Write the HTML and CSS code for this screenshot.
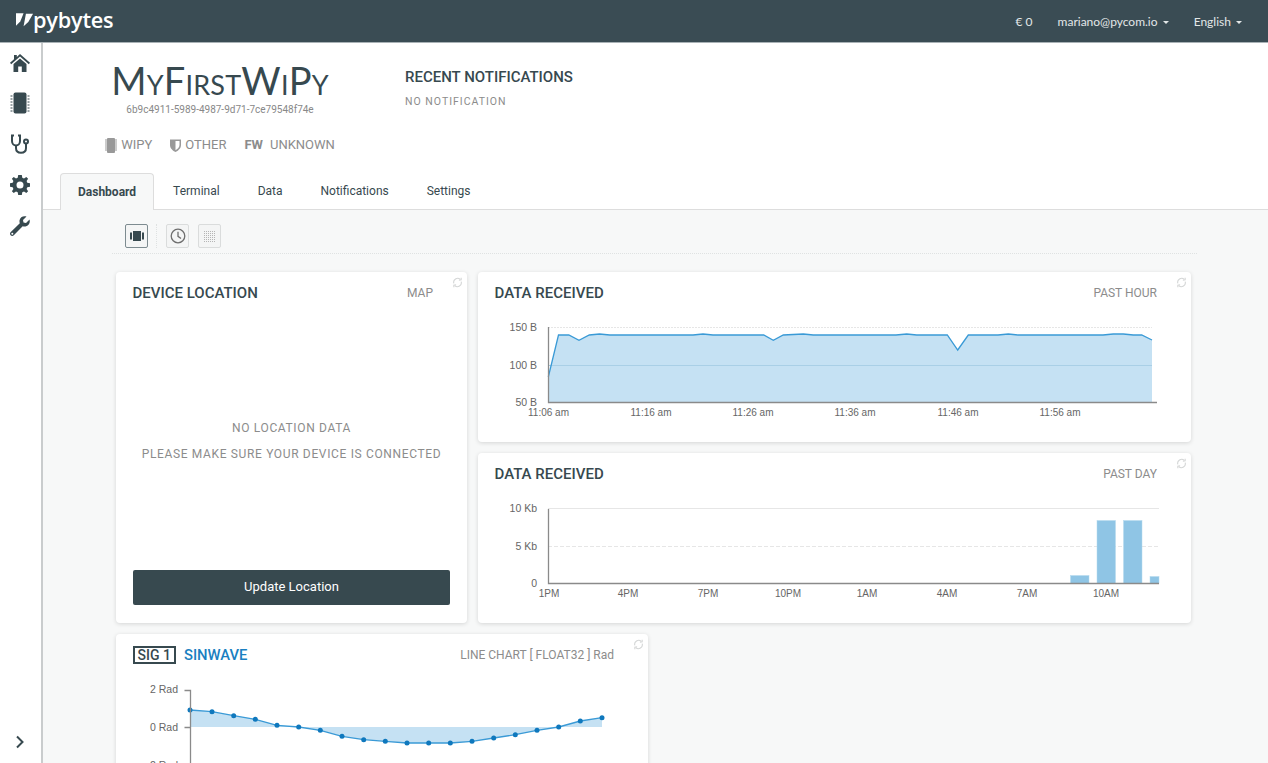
FILE: index.html
```html
<!DOCTYPE html>
<html lang="en">
<head>
    <meta charset="UTF-8">
    <title>Pybytes - MyFirstWiPy</title>
    <link rel="stylesheet" href="styles.css">
</head>
<body>
    <header class="topbar">
        <a href="#" class="logo">
            <svg class="logo-mark" viewBox="0 0 19 14" width="18" height="14"><polygon points="0,0 8,0 4.5,8.5 0,13"/><polygon points="10.5,0.5 18,0.5 13,9 8,13.500"/></svg>
            <span class="logo-text">pybytes</span>
        </a>
        <nav class="topnav">
            <span class="balance">€ 0</span>
            <a href="#" class="topnav-link email">mariano@pycom.io <i class="caret"></i></a>
            <a href="#" class="topnav-link lang">English <i class="caret"></i></a>
        </nav>
    </header>

    <div class="layout">
        <aside class="sidebar">
            <a href="#" class="side-link">
                <svg viewBox="0 0 22 20" width="22" height="20"><path d="M11 1 L21 9.800 L19.800 11.200 L11 3.600 L2.200 11.200 L1 9.800 L5 6.300 V2 H7.800 V3.900 Z"/><path d="M4.500 11 L11 5.400 L17.500 11 V19 H12.800 V13.500 H9.200 V19 H4.500 Z"/></svg>
            </a>
            <a href="#" class="side-link">
                <svg viewBox="0 0 20 22" width="20" height="22"><rect x="3.500" y="0.500" width="13" height="21" rx="2"/><path d="M0.500 4h2M0.500 7h2M0.500 10h2M0.500 13h2M0.500 16h2M0.500 19h2M17.500 4h2M17.500 7h2M17.500 10h2M17.500 13h2M17.500 16h2M17.500 19h2" class="pins"/></svg>
            </a>
            <a href="#" class="side-link">
                <svg viewBox="0 0 20 20" width="20" height="20" class="line-icon"><path d="M4 1.500 H2 V7 C2 10 4 11.500 6 11.500 C8 11.500 10 10 10 7 V1.500 H8"/><path d="M6 11.500 V14 C6 17 8 18.800 11 18.800 C14 18.800 16 17 16 14 V9.500"/><circle cx="16" cy="7.500" r="2"/></svg>
            </a>
            <a href="#" class="side-link">
                <svg viewBox="0 0 20 20" width="20" height="20"><path fill-rule="evenodd" d="M8.200 0 H11.800 L12.300 2.700 L14 3.400 L16.300 1.900 L18.100 3.700 L16.600 6 L17.300 7.700 L20 8.200 V11.800 L17.300 12.300 L16.600 14 L18.100 16.300 L16.300 18.100 L14 16.600 L12.300 17.300 L11.800 20 H8.200 L7.700 17.300 L6 16.600 L3.700 18.100 L1.900 16.300 L3.400 14 L2.700 12.300 L0 11.800 V8.200 L2.700 7.700 L3.400 6 L1.900 3.700 L3.700 1.900 L6 3.400 L7.700 2.700 Z M10 6.500 A3.500 3.500 0 1 0 10 13.500 A3.500 3.500 0 1 0 10 6.500 Z"/></svg>
            </a>
            <a href="#" class="side-link">
                <svg viewBox="0 0 20 20" width="20" height="20"><path fill-rule="evenodd" d="M19.500 3.500 L16 7 L13.500 6.500 L13 4 L16.500 0.500 C13.500 -0.500 10 1 9.500 4.500 C9.400 5.500 9.500 6.300 9.800 7.200 L0.800 16 C-0.200 17 -0.200 18.300 0.600 19.200 C1.500 20.100 2.900 20.100 3.800 19.200 L12.700 10.200 C13.600 10.500 14.500 10.600 15.500 10.400 C19 9.900 20.500 6.500 19.500 3.500 Z M2.300 16.700 A1 1 0 1 0 2.300 18.700 A1 1 0 1 0 2.300 16.700 Z"/></svg>
            </a>
            <a href="#" class="side-link expand">
                <svg viewBox="0 0 10 14" width="10" height="14" class="line-icon"><path d="M2 1.500 L7.500 7 L2 12.500"/></svg>
            </a>
        </aside>

        <main class="main">
            <section class="device-head">
                <div class="device">
                    <h1 class="device-name">MyFirstWiPy</h1>
                    <div class="device-id">6b9c4911-5989-4987-9d71-7ce79548f74e</div>
                    <div class="specs">
                        <span class="spec">
                            <svg viewBox="0 0 12 15" width="12" height="15"><rect x="2" y="0" width="8" height="15" rx="1"/><path d="M0 2h2M0 4h2M0 6h2M0 8h2M0 10h2M0 12h2M10 2h2M10 4h2M10 6h2M10 8h2M10 10h2M10 12h2" class="pins"/></svg>
                            WIPY
                        </span>
                        <span class="spec">
                            <svg viewBox="0 0 11 13" width="11" height="13"><path fill-rule="evenodd" d="M0 0.500 H11 V6 C11 9.500 8 11.800 5.500 13 C3 11.800 0 9.500 0 6 Z M5.500 2 V11.200 C7.300 10.200 9.500 8.500 9.500 6 V2 Z"/></svg>
                            OTHER
                        </span>
                        <span class="spec"><b>FW</b> UNKNOWN</span>
                    </div>
                </div>
                <div class="recent">
                    <h3 class="recent-title">RECENT NOTIFICATIONS</h3>
                    <p class="recent-empty">NO NOTIFICATION</p>
                </div>
            </section>

            <ul class="tabs">
                <li class="tab active"><a href="#">Dashboard</a></li>
                <li class="tab"><a href="#">Terminal</a></li>
                <li class="tab"><a href="#">Data</a></li>
                <li class="tab"><a href="#">Notifications</a></li>
                <li class="tab"><a href="#">Settings</a></li>
            </ul>

            <section class="dashboard">
                <div class="toolbar">
                    <button class="tool selected">
                        <svg viewBox="0 0 14 10" width="14" height="10"><rect x="3" y="0" width="8" height="10"/><rect x="0" y="1.500" width="2" height="7"/><rect x="12" y="1.500" width="2" height="7"/></svg>
                    </button>
                    <span class="tool-sep"></span>
                    <button class="tool">
                        <svg viewBox="0 0 16 16" width="16" height="16" class="clock"><circle cx="8" cy="8" r="6.800"/><path d="M8 3.800 V8.300 L11 10.500"/></svg>
                    </button>
                    <button class="tool">
                        <svg viewBox="0 0 11 11" width="11" height="11" class="dots"><path d="M0 0.500h11M0 2.500h11M0 4.500h11M0 6.500h11M0 8.500h11M0 10.500h11"/></svg>
                    </button>
                </div>

                <div class="cards">
                    <article class="card location">
                        <svg class="refresh" viewBox="0 0 12 12" width="11" height="11"><path d="M2 7 A4.300 4.300 0 0 1 9 2.600 M10 5 A4.300 4.300 0 0 1 3 9.400"/><path d="M7.500 3.500 L10 3 V0.800 M4.500 8.500 L2 9 V11.200"/></svg>
                        <div class="card-head">
                            <h4 class="card-title">DEVICE LOCATION</h4>
                            <span class="card-meta">MAP</span>
                        </div>
                        <div class="no-data">
                            <p>NO LOCATION DATA</p>
                            <p>PLEASE MAKE SURE YOUR DEVICE IS CONNECTED</p>
                        </div>
                        <button class="update-btn">Update Location</button>
                    </article>

                    <article class="card">
                        <svg class="refresh" viewBox="0 0 12 12" width="11" height="11"><path d="M2 7 A4.300 4.300 0 0 1 9 2.600 M10 5 A4.300 4.300 0 0 1 3 9.400"/><path d="M7.500 3.500 L10 3 V0.800 M4.500 8.500 L2 9 V11.200"/></svg>
                        <div class="card-head">
                            <h4 class="card-title">DATA RECEIVED</h4>
                            <span class="card-meta">PAST HOUR</span>
                        </div>
                        <svg class="chart" viewBox="478 314 713 110" width="713" height="110">
                            <line x1="548" y1="327.500" x2="1152" y2="327.500" class="grid dotted"/>
                            <polygon class="area" points="548.300,402 548.300,377 558.500,335 568.800,335 579,340.300 589.300,335 599.500,334 609.800,335 693,335 703,334 713,335 763.700,335 773.300,340.300 783.300,335 803.300,334 813.300,335 896,335 906.700,334 916.700,335 947.300,335 957.700,350 968.300,335 998,335 1008.300,334 1018,335 1103,335 1113.300,334 1123.300,334 1133.300,335 1141.700,335 1152,340 1152,402"/>
                            <line x1="548" y1="365.500" x2="1152" y2="365.500" class="grid over"/>
                            <polyline class="line" points="548.300,377 558.500,335 568.800,335 579,340.300 589.300,335 599.500,334 609.800,335 693,335 703,334 713,335 763.700,335 773.300,340.300 783.300,335 803.300,334 813.300,335 896,335 906.700,334 916.700,335 947.300,335 957.700,350 968.300,335 998,335 1008.300,334 1018,335 1103,335 1113.300,334 1123.300,334 1133.300,335 1141.700,335 1152,340"/>
                            <path class="axis" d="M548.500 327 V402.500 H1157"/>
                            <text x="537" y="331" class="tick end">150 B</text>
                            <text x="537" y="369" class="tick end">100 B</text>
                            <text x="537" y="406" class="tick end">50 B</text>
                            <text x="548.500" y="416" class="tick small mid">11:06 am</text>
                            <text x="651" y="416" class="tick small mid">11:16 am</text>
                            <text x="753" y="416" class="tick small mid">11:26 am</text>
                            <text x="855" y="416" class="tick small mid">11:36 am</text>
                            <text x="958" y="416" class="tick small mid">11:46 am</text>
                            <text x="1060" y="416" class="tick small mid">11:56 am</text>
                        </svg>
                    </article>

                    <article class="card">
                        <svg class="refresh" viewBox="0 0 12 12" width="11" height="11"><path d="M2 7 A4.300 4.300 0 0 1 9 2.600 M10 5 A4.300 4.300 0 0 1 3 9.400"/><path d="M7.500 3.500 L10 3 V0.800 M4.500 8.500 L2 9 V11.200"/></svg>
                        <div class="card-head">
                            <h4 class="card-title">DATA RECEIVED</h4>
                            <span class="card-meta">PAST DAY</span>
                        </div>
                        <svg class="chart" viewBox="478 495 713 110" width="713" height="110">
                            <line x1="548" y1="508.500" x2="1159" y2="508.500" class="grid"/>
                            <line x1="548" y1="546.500" x2="1159" y2="546.500" class="grid dashed"/>
                            <rect x="1070.500" y="575.500" width="18.500" height="8" class="bar"/>
                            <rect x="1097" y="520.500" width="18.500" height="63" class="bar"/>
                            <rect x="1123.500" y="520.500" width="18.500" height="63" class="bar"/>
                            <rect x="1150" y="576.500" width="9" height="7" class="bar"/>
                            <path class="axis" d="M548.500 509 V583.500 H1159"/>
                            <text x="537" y="512" class="tick end">10 Kb</text>
                            <text x="537" y="550" class="tick end">5 Kb</text>
                            <text x="537" y="587" class="tick end">0</text>
                            <text x="549" y="597" class="tick small mid">1PM</text>
                            <text x="628" y="597" class="tick small mid">4PM</text>
                            <text x="708" y="597" class="tick small mid">7PM</text>
                            <text x="788" y="597" class="tick small mid">10PM</text>
                            <text x="867" y="597" class="tick small mid">1AM</text>
                            <text x="947" y="597" class="tick small mid">4AM</text>
                            <text x="1027" y="597" class="tick small mid">7AM</text>
                            <text x="1106" y="597" class="tick small mid">10AM</text>
                        </svg>
                    </article>
                </div>

                <article class="card signal">
                    <svg class="refresh" viewBox="0 0 12 12" width="11" height="11"><path d="M2 7 A4.300 4.300 0 0 1 9 2.600 M10 5 A4.300 4.300 0 0 1 3 9.400"/><path d="M7.500 3.500 L10 3 V0.800 M4.500 8.500 L2 9 V11.200"/></svg>
                    <div class="card-head">
                        <h4 class="card-title">
                            <span class="sig-badge">SIG 1</span>
                            <span class="sig-name">SINWAVE</span>
                        </h4>
                        <span class="card-meta">LINE CHART [ FLOAT32 ] Rad</span>
                    </div>
                    <svg class="chart" viewBox="116 676 532 100" width="532" height="100">
                        <polygon class="area" points="190,710 212,711.700 233.700,715.700 255.300,719.300 277,725.300 298.700,727 320.300,730.300 342,736.300 363.700,739.700 385.300,741.300 407,743 428.700,743 450.300,743 472,741.300 493.700,738 515.300,734.700 537,730.300 558.700,727 580.300,721 602,717.700 602,727 190,727"/>
                        <polyline class="line" points="190,710 212,711.700 233.700,715.700 255.300,719.300 277,725.300 298.700,727 320.300,730.300 342,736.300 363.700,739.700 385.300,741.300 407,743 428.700,743 450.300,743 472,741.300 493.700,738 515.300,734.700 537,730.300 558.700,727 580.300,721 602,717.700"/>
                        <g class="dots-group">
                            <circle cx="190" cy="710" r="2.500"/><circle cx="212" cy="711.700" r="2.500"/><circle cx="233.700" cy="715.700" r="2.500"/><circle cx="255.300" cy="719.300" r="2.500"/><circle cx="277" cy="725.300" r="2.500"/><circle cx="298.700" cy="727" r="2.500"/><circle cx="320.300" cy="730.300" r="2.500"/><circle cx="342" cy="736.300" r="2.500"/><circle cx="363.700" cy="739.700" r="2.500"/><circle cx="385.300" cy="741.300" r="2.500"/><circle cx="407" cy="743" r="2.500"/><circle cx="428.700" cy="743" r="2.500"/><circle cx="450.300" cy="743" r="2.500"/><circle cx="472" cy="741.300" r="2.500"/><circle cx="493.700" cy="738" r="2.500"/><circle cx="515.300" cy="734.700" r="2.500"/><circle cx="537" cy="730.300" r="2.500"/><circle cx="558.700" cy="727" r="2.500"/><circle cx="580.300" cy="721" r="2.500"/><circle cx="602" cy="717.700" r="2.500"/>
                        </g>
                        <path class="axis" d="M184.500 690.500 H190.500 V776 M184.500 727.500 H190.500"/>
                        <text x="178" y="693" class="tick end">2 Rad</text>
                        <text x="178" y="731" class="tick end">0 Rad</text>
                        <text x="178" y="769" class="tick end">-2 Rad</text>
                    </svg>
                </article>
            </section>
        </main>
    </div>
</body>
</html>
```

FILE: styles.css
```css
* {
    box-sizing: border-box;
}
html, body {
    height: 100%;
}
body {
    margin: 0;
    overflow: hidden;
    font-family: Roboto, sans-serif;
    color: #37494f;
    background-color: #fff;
}
a {
    color: inherit;
    text-decoration: none;
}
h1, h3, h4, p, ul {
    margin: 0;
    padding: 0;
}

/* top bar */
.topbar {
    height: 43px;
    display: flex;
    align-items: center;
    justify-content: space-between;
    padding: 0 26px 0 16px;
    background-color: #3a4c54;
    border-bottom: 1px solid #a9b2b6;
}
.logo {
    display: flex;
    align-items: center;
    color: #fff;
}
.logo-mark {
    fill: #fff;
    margin-bottom: 3px;
}
.logo-text {
    font-family: "Open Sans", sans-serif;
    font-weight: 600;
    font-size: 21.7px;
    line-height: 26px;
    letter-spacing: -0.2px;
    margin-bottom: 2px;
    margin-left: -1px;
}
.topnav {
    display: flex;
    align-items: center;
    font-family: Lato, sans-serif;
    font-size: 12px;
    color: #e3e7e8;
}
.balance {
    margin-right: 25px;
}
.email {
    margin-right: 25px;
}
.caret {
    display: inline-block;
    width: 0;
    height: 0;
    margin-left: 2px;
    vertical-align: middle;
    border-top: 3px solid #e3e7e8;
    border-left: 3px solid transparent;
    border-right: 3px solid transparent;
}

/* shell */
.layout {
    display: flex;
    height: 720px;
}
.sidebar {
    width: 43px;
    flex: none;
    display: flex;
    flex-direction: column;
    align-items: center;
    padding: 0 1px 0 0;
    border-right: 2px solid #c9cccd;
    background-color: #fff;
}
.side-link {
    height: 41px;
    width: 100%;
    flex: none;
    display: flex;
    align-items: center;
    justify-content: center;
}
.side-link:first-child {
    height: 39px;
}
.side-link svg {
    fill: #37494f;
}
.side-link .pins {
    stroke: #37494f;
    stroke-width: 1;
    fill: none;
}
.side-link .line-icon {
    fill: none;
    stroke: #37494f;
    stroke-width: 2;
}
.expand {
    margin-top: auto;
    margin-bottom: 1px;
}
.main {
    flex: 1;
    min-width: 0;
    overflow: hidden;
    display: flex;
    flex-direction: column;
}

/* device header */
.device-head {
    height: 130px;
    flex: none;
    display: flex;
    padding-left: 17px;
}
.device {
    width: 320px;
    text-align: center;
}
.device-name {
    margin-top: 14px;
    font-family: Lato, sans-serif;
    font-weight: 400;
    font-size: 38px;
    line-height: 46px;
    letter-spacing: 0.2px;
    font-variant: small-caps;
    color: #37494f;
}
.device-id {
    font-size: 10px;
    line-height: 13px;
    color: #888;
}
.specs {
    display: flex;
    justify-content: center;
    gap: 18px;
    margin-top: 20px;
    font-size: 13px;
    line-height: 18px;
    color: #8c8c8c;
}
.spec {
    display: flex;
    align-items: center;
    gap: 4px;
}
.spec svg {
    fill: #999;
}
.spec .pins {
    stroke: #999;
    stroke-width: 1;
    fill: none;
}
.spec b {
    margin-right: 3px;
}
.recent {
    margin-left: 25px;
    padding-top: 25px;
}
.recent-title {
    font-size: 15px;
    font-weight: 500;
    line-height: 18px;
    color: #37494f;
}
.recent-empty {
    margin-top: 9px;
    font-size: 10.500px;
    line-height: 14px;
    letter-spacing: 1px;
    color: #8c8c8c;
}

/* tabs */
.tabs {
    flex: none;
    list-style: none;
    display: flex;
    height: 37px;
    padding-left: 17px;
    border-bottom: 1px solid #ddd;
}
.tab {
    height: 37px;
    padding: 0 18px;
    margin-right: 2px;
    font-size: 12px;
    line-height: 36px;
    color: #37494f;
}
.tab.active {
    padding: 0 17px;
    margin-right: 1px;
    font-weight: 700;
    background-color: #f7f8f8;
    border: 1px solid #ddd;
    border-bottom: none;
    border-radius: 4px 4px 0 0;
}

/* dashboard */
.dashboard {
    flex: 1;
    padding: 0 0 0 69px;
    background-color: #f7f8f8;
}
.toolbar {
    width: 1085px;
    height: 44px;
    display: flex;
    align-items: flex-start;
    padding: 14px 0 0 13px;
    border-bottom: 1px dotted #dfe2e2;
}
.tool {
    width: 23px;
    height: 24px;
    padding: 0;
    display: flex;
    align-items: center;
    justify-content: center;
    margin-right: 9px;
    background-color: #f4f5f5;
    border: 1px solid #dadcdc;
    border-radius: 2px;
}
.tool.selected {
    border-color: #7d8b90;
    margin-right: 0;
}
.tool.selected svg {
    fill: #37494f;
}
.tool-sep {
    width: 1px;
    height: 24px;
    margin: 0 9px 0 8px;
    border-left: 1px dotted #dfe2e2;
}
.clock {
    fill: none;
    stroke: #6e6e6e;
    stroke-width: 1.300;
}
.dots {
    fill: none;
    stroke: #b5b5b5;
    stroke-width: 1;
    stroke-dasharray: 1 1;
}
.cards {
    display: grid;
    grid-template-columns: 351px 713px;
    grid-template-rows: 170px 170px;
    gap: 11px;
    margin: 18px 0 0 4px;
}
.card {
    position: relative;
    background-color: #fff;
    border-radius: 4px;
    box-shadow: 0 1px 4px rgba(0, 0, 0, 0.14);
    overflow: hidden;
}
.location {
    grid-row: 1 / span 2;
    display: flex;
    flex-direction: column;
}
.signal {
    width: 532px;
    height: 200px;
    margin: 11px 0 0 4px;
}
.refresh {
    position: absolute;
    top: 5px;
    right: 4px;
    fill: none;
    stroke: #d4d6d6;
    stroke-width: 1.200;
}
.card-head {
    display: flex;
    justify-content: space-between;
    align-items: center;
    height: 42px;
    padding: 0 34px 0 16.500px;
}
.card-title {
    font-size: 15px;
    font-weight: 500;
    color: #37494f;
}
.card-meta {
    font-size: 12px;
    color: #8c8c8c;
}
.signal .card-title {
    display: flex;
    align-items: center;
    gap: 8px;
}
.sig-badge {
    border: 2px solid #37494f;
    height: 18px;
    line-height: 14px;
    padding: 0 3px;
    font-size: 14px;
    white-space: nowrap;
}
.sig-name {
    font-size: 14.800px;
    color: #1a7fc1;
}
.no-data {
    flex: 1;
    padding-top: 101px;
    text-align: center;
    font-size: 12px;
    letter-spacing: 0.65px;
    line-height: 26px;
    color: #8c8c8c;
}
.update-btn {
    height: 35px;
    margin: 0 17px 18px;
    padding: 0 0 2px;
    border: none;
    border-radius: 2px;
    font-family: Roboto, sans-serif;
    font-size: 13px;
    color: #fff;
    background-color: #37494f;
}

/* charts */
.chart {
    display: block;
}
.grid {
    stroke: #e6e6e6;
    stroke-width: 1;
}
.dotted {
    stroke-dasharray: 2 1;
}
.dashed {
    stroke-dasharray: 4 2;
}
.over {
    stroke: #a9cfe6;
}
.area {
    fill: #c5e1f3;
}
.line {
    fill: none;
    stroke: #3a9ad6;
    stroke-width: 1.300;
}
.axis {
    fill: none;
    stroke: #8a8a8a;
    stroke-width: 1.300;
}
.bar {
    fill: #8fc5e5;
    stroke: #b5d9ee;
    stroke-width: 0.5;
}
.dots-group {
    fill: #0f78bd;
}
.tick {
    font-family: "Liberation Sans", sans-serif;
    font-size: 10.500px;
    fill: #666;
}
.small {
    font-size: 10px;
}
.end {
    text-anchor: end;
}
.mid {
    text-anchor: middle;
}
```
